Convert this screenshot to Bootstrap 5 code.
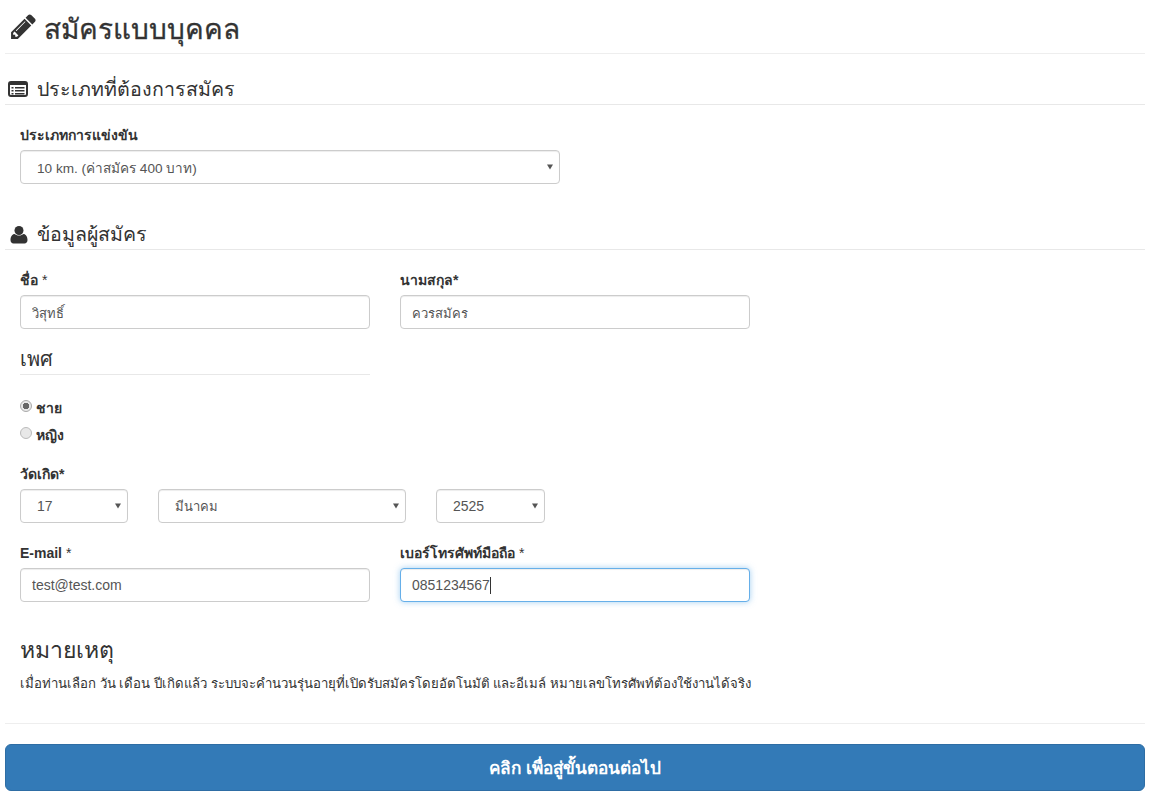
<!DOCTYPE html>
<html lang="th">
<head>
<meta charset="utf-8">
<title>สมัครแบบบุคคล</title>
<link href="https://cdn.jsdelivr.net/npm/bootstrap@5.3.0/dist/css/bootstrap.min.css" rel="stylesheet">
<style>
body{font-family:"Liberation Sans",Arial,"Noto Sans",sans-serif;font-size:14px;line-height:20px;color:#333;background:#fff}
.page-wrap{padding:0 5px}
.page-head{display:flex;align-items:center;gap:6px;height:54px;margin:0;border-bottom:1px solid #eee;font-size:28px;font-weight:500;color:#333;padding:6px 0 0 4px;-webkit-text-stroke:.3px #333}
.icon-pencil{margin-top:-6px}
.sect-head{display:flex;align-items:center;height:31px;margin:0;border-bottom:1px solid #e8e8e8;font-size:19.600px;font-weight:500;color:#333;padding:2px 0 0 2px;gap:8px}
.sect-one{margin-top:20px}
.sect-two{margin-top:35px}
.icon-list{margin-top:-2px}
.icon-user{margin-left:2px}
.form-area{padding:0 15px}
.fld-label{display:block;font-size:14px;font-weight:700;line-height:20px;margin:0 0 5px;color:#333}
.fld-ctl{height:34px;border:1px solid #ccc;border-radius:4px;font-size:14px;line-height:20px;color:#555;padding:6px 11px;box-shadow:inset 0 1px 1px rgba(0,0,0,.075)}
.fld-thai{font-size:13px;padding-top:7px;padding-bottom:5px}
select.fld-ctl{padding-left:16px;background-position:right 6px center;background-size:6px 6px;background-image:url("data:image/svg+xml,%3Csvg xmlns='http://www.w3.org/2000/svg' viewBox='0 0 7 6'%3E%3Cpath fill='%23555' d='M0 0h7L3.500 6z'/%3E%3C/svg%3E")}
select.fld-mix{font-size:13.600px;padding-top:8px;padding-bottom:4px}
select.fld-thai{font-size:13px}
.fld-ctl.is-focus{border-color:#66afe9;box-shadow:inset 0 1px 1px rgba(0,0,0,.075),0 0 6px rgba(102,175,233,.6)}
.w-type{width:540px}
.w-half{width:350px}
.w-day{width:108px}
.w-month{width:248px}
.w-year{width:109px}
.two-cols{display:flex;gap:30px}
.sub-head{width:350px;font-size:20px;font-weight:500;line-height:26px;color:#333;border-bottom:1px solid #e8e8e8;height:30px;margin:16px 0 0;padding-top:1px}
.radio-row{display:flex;align-items:center;gap:4px;height:27px;font-size:14px;font-weight:700}
.radio-row .form-check-input{width:12px;height:12px;margin:0 0 4px;background-color:#e8e8e8;border:1px solid #bbb;position:static}
.radio-row .form-check-input:checked{background-color:#e8e8e8;border-color:#aaa;background-image:radial-gradient(circle,#666 0 3px,transparent 3.500px)}
.radio-group{margin-top:19px}
.caret-after{display:inline-block;width:1px;height:17px;background:#333;vertical-align:-4px}
.note-title{font-size:23px;font-weight:500;line-height:28px;margin:34px 0 0;color:#333}
.note-text{font-size:13.200px;line-height:20px;margin:10px 0 0;color:#333}
.foot-rule{margin:29px 0 20px;border:0;border-top:1px solid #eee;opacity:1}
.go-btn{display:block;width:100%;height:47px;background:#337ab7;border:1px solid #2e6da4;border-radius:6px;color:#fff;font-size:17.200px;font-weight:700;padding:0}
.date-row{display:flex;gap:30px}
</style>
</head>
<body>
<div class="page-wrap">
  <h2 class="page-head">
    <svg class="icon-pencil" width="29" height="29" viewBox="0 0 1792 1792" fill="#333"><path d="M491 1536l91-91-235-235-91 91v107h128v128h107zm523-928q0-22-22-22-10 0-17 7l-542 542q-7 7-7 17 0 22 22 22 10 0 17-7l542-542q7-7 7-17zm-54-192l416 416-832 832h-416v-416zm683 96q0 53-37 90l-166 166-416-416 166-165q36-38 90-38 53 0 91 38l235 234q37 39 37 91z"/></svg>
    <span>สมัครแบบบุคคล</span>
  </h2>
  <h4 class="sect-head sect-one">
    <svg class="icon-list" width="22" height="18" viewBox="0 0 22 18"><rect x="2" y="2" width="18" height="14" rx="2" fill="none" stroke="#333" stroke-width="2"/><path fill="#333" d="M2 2h18v3H2zM4.500 7h2v1.500h-2zM4.500 10h2v1.500h-2zM4.500 13h2v1.500h-2zM8 7h9.500v1.500H8zM8 10h9.500v1.500H8zM8 13h9.500v1.500H8z"/></svg>
    <span>ประเภทที่ต้องการสมัคร</span>
  </h4>
  <div class="form-area mt-3 pt-1">
    <label class="fld-label" for="t1">ประเภทการแข่งขัน</label>
    <select id="t1" class="form-select fld-ctl fld-mix w-type"><option>10 km. (ค่าสมัคร 400 บาท)</option></select>
  </div>
  <h4 class="sect-head sect-two">
    <svg class="icon-user" width="20" height="20" viewBox="0 0 20 20" fill="#333"><circle cx="10" cy="5.500" r="4.500"/><path d="M1.500 15c0-3.500 2-6 4-6 1 .8 2.800 1.500 4.500 1.500S13.500 9.800 14.500 9c2 0 4 2.500 4 6 0 2-1.300 3.500-3 3.500h-11c-1.700 0-3-1.500-3-3.500z"/></svg>
    <span>ข้อมูลผู้สมัคร</span>
  </h4>
  <div class="form-area mt-3 pt-1">
    <div class="two-cols">
      <div class="w-half">
        <label class="fld-label" for="f1">ชื่อ <span class="fw-normal">*</span></label>
        <input id="f1" class="form-control fld-ctl fld-thai" value="วิสุทธิ์">
      </div>
      <div class="w-half">
        <label class="fld-label" for="f2">นามสกุล*</label>
        <input id="f2" class="form-control fld-ctl fld-thai" value="ควรสมัคร">
      </div>
    </div>
    <div class="sub-head">เพศ</div>
    <div class="radio-group">
      <div class="radio-row"><input class="form-check-input" type="radio" name="g" id="g1" checked><label for="g1">ชาย</label></div>
      <div class="radio-row"><input class="form-check-input" type="radio" name="g" id="g2"><label for="g2">หญิง</label></div>
    </div>
    <label class="fld-label mt-3">วัดเกิด*</label>
    <div class="date-row">
      <select class="form-select fld-ctl w-day" aria-label="วัน"><option>17</option></select>
      <select class="form-select fld-ctl fld-thai w-month" aria-label="เดือน"><option>มีนาคม</option></select>
      <select class="form-select fld-ctl w-year" aria-label="ปี"><option>2525</option></select>
    </div>
    <div class="two-cols mt-3 pt-1">
      <div class="w-half">
        <label class="fld-label" for="f3">E-mail <span class="fw-normal">*</span></label>
        <input id="f3" class="form-control fld-ctl" value="test@test.com">
      </div>
      <div class="w-half">
        <label class="fld-label" for="f4">เบอร์โทรศัพท์มือถือ <span class="fw-normal">*</span></label>
        <div class="form-control fld-ctl is-focus">0851234567<span class="caret-after"></span></div>
      </div>
    </div>
    <h4 class="note-title">หมายเหตุ</h4>
    <p class="note-text">เมื่อท่านเลือก วัน เดือน ปีเกิดแล้ว ระบบจะคำนวนรุ่นอายุที่เปิดรับสมัครโดยอัตโนมัติ และอีเมล์ หมายเลขโทรศัพท์ต้องใช้งานได้จริง</p>
  </div>
  <hr class="foot-rule">
  <button class="go-btn" type="button">คลิก เพื่อสู่ขั้นตอนต่อไป</button>
</div>
</body>
</html>
